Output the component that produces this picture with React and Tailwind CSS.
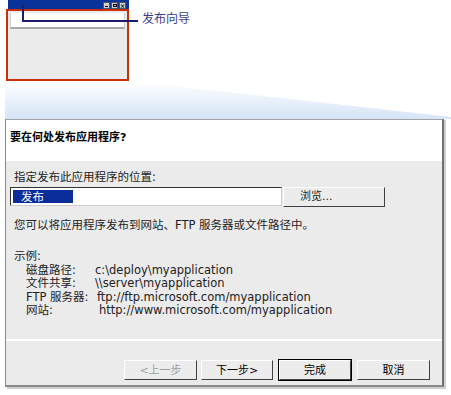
import React from "react";

const font = { fontFamily: '"DejaVu Sans", "Noto Sans CJK SC", sans-serif' };

function MiniWindow() {
  return (
    <div className="relative h-[118px]">
      <div className="absolute left-[8px] top-0 w-[121px] h-[10px] bg-[#0a3399] flex items-start justify-end pr-[3px] pt-[2px] gap-[1px]">
        <span className="w-[7px] h-[7px] bg-[#d4d0c8] border border-[#555] flex items-end justify-center">
          <span className="w-[3px] h-[1px] bg-black mb-[1px]" />
        </span>
        <span className="w-[7px] h-[7px] bg-[#d4d0c8] border border-[#555] flex items-center justify-center">
          <span className="w-[4px] h-[3px] border border-black" />
        </span>
        <span className="w-[7px] h-[7px] bg-[#d4d0c8] border border-[#555] flex items-center justify-center text-[6px] leading-none font-bold">
          ×
        </span>
      </div>
      <div className="absolute left-[6px] top-[9px] w-[123px] h-[72px] border-2 border-[#c8300a] bg-[#ebebeb] p-[2px]">
        <div className="h-[16px] bg-white border-b-2 border-[#a8a8a8] border-x border-x-[#d0d0d0]" />
      </div>
      <div className="absolute left-[22px] top-[5px] w-[2px] h-[17px] bg-[#1c1c6e]" />
      <div className="absolute left-[22px] top-[20px] w-[116px] h-[2px] bg-[#1c1c6e]" />
      <div className="absolute left-[142px] top-[13px] text-[12px] leading-none text-[#3d3d8c]">发布向导</div>
      <svg className="absolute left-0 top-[81px]" width="451" height="38">
        <defs>
          <linearGradient id="g" x1="0" y1="0" x2="0" y2="1">
            <stop offset="0" stopColor="#ffffff" />
            <stop offset="1" stopColor="#d6e4f8" />
          </linearGradient>
        </defs>
        <polygon points="5,0 129,0 451,36 451,38 5,38" fill="url(#g)" />
      </svg>
    </div>
  );
}

function Btn({ children, disabled, strong }) {
  return (
    <button
      className={
        "w-full h-[20px] text-[11px] leading-none bg-[#ececec] border border-t-white border-l-white border-r-[#404040] border-b-[#404040] " +
        (strong ? "outline outline-1 outline-black " : "") +
        (disabled ? "text-[#a0a0a0]" : "text-black")
      }
    >
      {children}
    </button>
  );
}

export default function App() {
  return (
    <div className="w-[451px] h-[395px] bg-white overflow-hidden" style={font}>
      <MiniWindow />
      <div className="ml-[5px] w-[439px] h-[269px] border-t-2 border-t-[#a4a4a4] border-l border-l-[#888] border-r-2 border-r-[#707070] border-b-2 border-b-[#8a8a8a] shadow-[2px_2px_0_#cfcfcf] flex flex-col bg-[#ebebeb]">
        <div className="h-[41px] bg-white px-[4px] pt-[10px] text-[11px] font-bold text-black">
          要在何处发布应用程序?
        </div>
        <div className="flex-1 flex flex-col text-[11.5px] text-[#222] leading-[13.5px] px-[4px]">
          <div className="mt-[10px] pl-[4px]">指定发布此应用程序的位置:</div>
          <div className="mt-[2px] flex items-center gap-[1px]">
            <div className="w-[272px] h-[19px] bg-white border border-[#333] border-r-[#ccc] border-b-[#ccc] p-[2px] flex">
              <span className="w-[60px] bg-[#0a2d9a] text-white pl-[8px] leading-[14px]">发布</span>
            </div>
            <button className="w-[102px] h-[20px] bg-[#ececec] border border-t-white border-l-white border-r-[#404040] border-b-[#404040] text-left pl-[16px] text-[11px]">
              浏览...
            </button>
          </div>
          <div className="mt-[12px] pl-[4px]">您可以将应用程序发布到网站、FTP 服务器或文件路径中。</div>
          <div className="mt-[18px] pl-[4px]">示例:</div>
          <div className="pl-[16px] grid grid-cols-[69px_1fr]">
            <span>磁盘路径:</span>
            <span>c:\deploy\myapplication</span>
            <span>文件共享:</span>
            <span>\\server\myapplication</span>
            <span>FTP 服务器:</span>
            <span className="pl-[2px]">ftp://ftp.microsoft.com/myapplication</span>
            <span>网站:</span>
            <span className="pl-[4px]">http://www.microsoft.com/myapplication</span>
          </div>
          <div className="mt-auto h-[2px] bg-white -mx-[4px] mb-[19px]" />
          <div className="flex justify-end gap-[4px] pr-[8px] mb-[5px]">
            <div className="w-[73px] flex"><Btn disabled>&lt;上一步</Btn></div>
            <div className="flex gap-[6px]">
              <span className="w-[72px] flex flex-col"><Btn>下一步&gt;</Btn></span>
              <span className="w-[72px] flex flex-col"><Btn strong>完成</Btn></span>
              <span className="w-[73px] flex flex-col"><Btn>取消</Btn></span>
            </div>
          </div>
        </div>
      </div>
    </div>
  );
}
